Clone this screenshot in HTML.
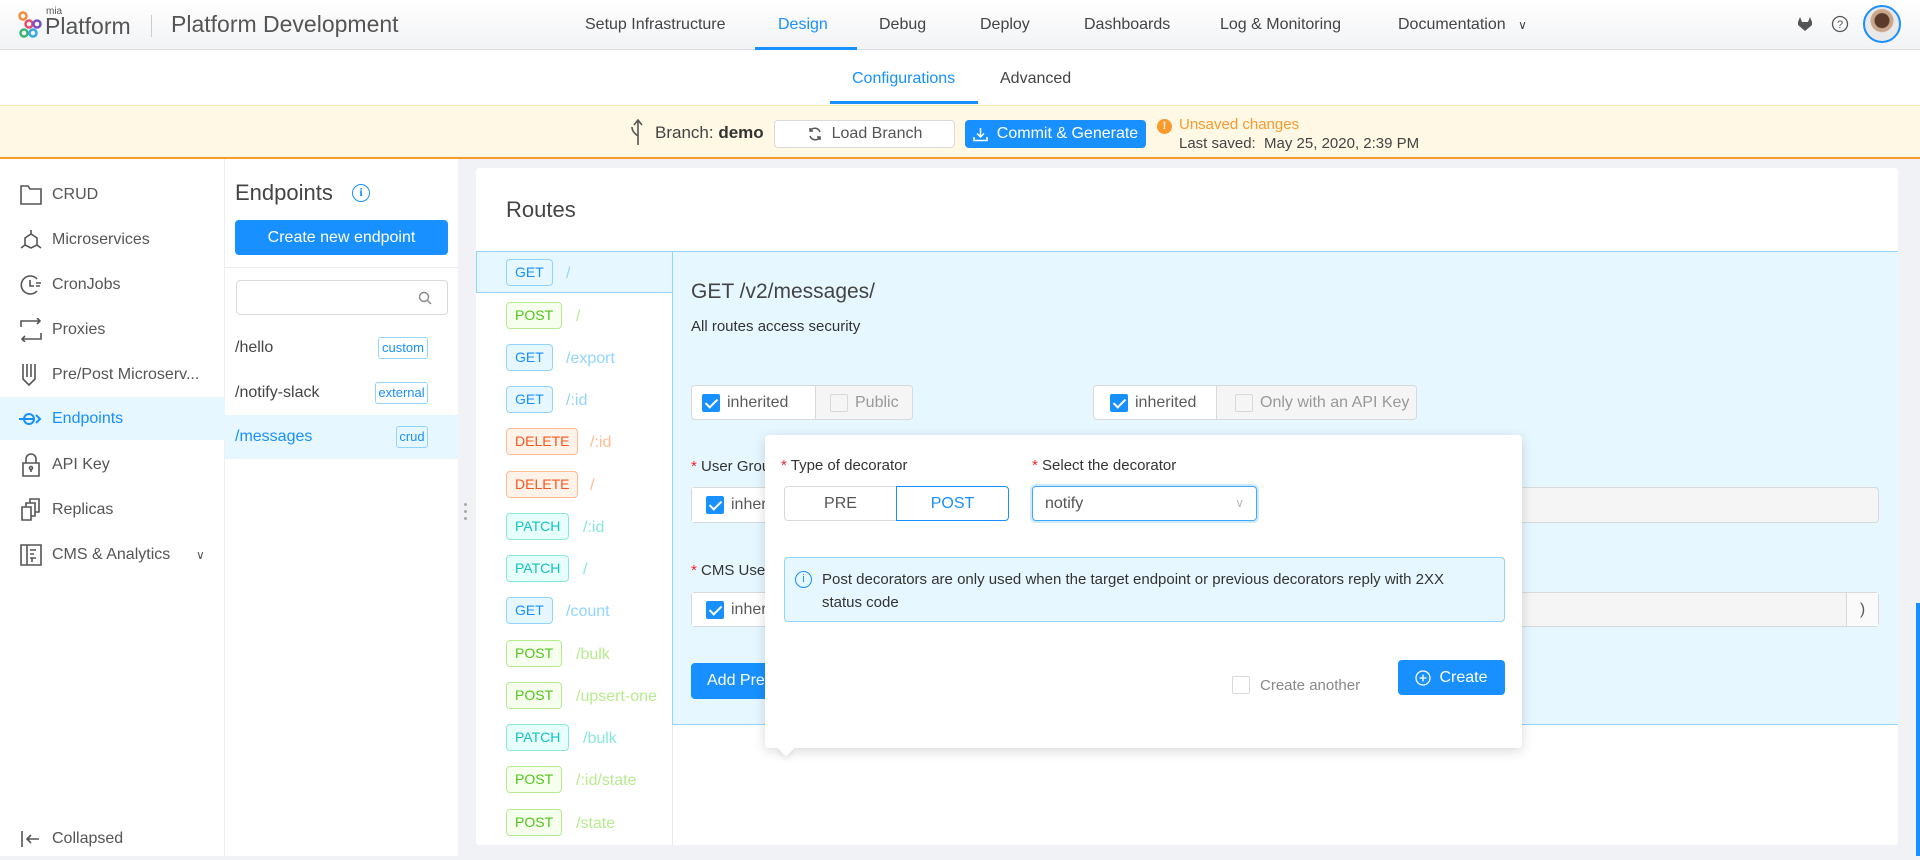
<!DOCTYPE html>
<html><head><meta charset="utf-8"><style>
*{box-sizing:border-box;margin:0;padding:0}
body{width:1920px;height:856px;overflow:hidden;background:#f0f2f5;font-family:"Liberation Sans",sans-serif;font-size:16px;color:rgba(0,0,0,.65);position:relative}
.a{position:absolute}
.hdr{left:0;top:0;width:1920px;height:50px;background:linear-gradient(#fff,#f2f3f5);border-bottom:1px solid #dcdfe4}
.nav{top:16px;font-size:16px;color:#444}
.sub{left:0;top:50px;width:1920px;height:55px;background:#fff}
.bar{left:0;top:105px;width:1920px;height:54px;background:#fef8e4;border-top:1px solid #f3e7b9;border-bottom:2px solid #fa9a2d}
.side{left:0;top:159px;width:225px;height:697px;background:#fff;border-right:1px solid #eee}
.si{left:0;width:225px;height:43px;display:flex;align-items:center;padding-left:52px;color:#555}
.ico{position:absolute;left:19px;top:10px;width:24px;height:24px}
.col2{left:225px;top:159px;width:233px;height:697px;background:#fff}
.card{left:476px;top:168px;width:1422px;height:677px;background:#fff;border-radius:3px}
.tag{position:absolute;left:30px;height:27px;border:1px solid;border-radius:4px;font-size:14px;line-height:25px;padding:0 8px;white-space:nowrap}
.rp{position:absolute;font-size:16px;line-height:27px;white-space:nowrap}
.btn{border-radius:4px;font-size:16px;display:flex;align-items:center;justify-content:center}
.cb{display:inline-block;width:18px;height:18px;border-radius:2px;background:#1890ff;position:relative;vertical-align:middle}
.cb:after{content:"";position:absolute;left:6px;top:2px;width:5px;height:10px;border:solid #fff;border-width:0 2px 2px 0;transform:rotate(45deg)}
.cbe{display:inline-block;width:18px;height:18px;border-radius:2px;border:1px solid #d9d9d9;background:#fff;vertical-align:middle}
.req{color:#f5222d}
</style></head><body>

<div class="a hdr">
  <svg class="a" style="left:17px;top:11px" width="28" height="28" viewBox="0 0 28 28" fill="none" stroke-width="2.5">
    <circle cx="6" cy="5" r="3.5" stroke="#f08a3c"/><circle cx="12" cy="13" r="3.5" stroke="#e64b6b"/><circle cx="20" cy="13" r="3.5" stroke="#7b4fc4"/><circle cx="7" cy="22" r="3.5" stroke="#3cb371"/><circle cx="16" cy="22" r="3.5" stroke="#35a7e8"/>
  </svg>
  <div class="a" style="left:46px;top:6px;font-size:10px;color:#555">mia</div>
  <div class="a" style="left:45px;top:13px;font-size:23px;color:#555">Platform</div>
  <div class="a" style="left:151px;top:15px;width:1px;height:22px;background:#ccc"></div>
  <div class="a" style="left:171px;top:11px;font-size:23px;color:#555">Platform Development</div>
  <div class="a nav" style="left:585px">Setup Infrastructure</div>
  <div class="a nav" style="left:778px;color:#1890ff">Design</div>
  <div class="a" style="left:755px;top:47px;width:102px;height:3px;background:#1890ff"></div>
  <div class="a nav" style="left:879px">Debug</div>
  <div class="a nav" style="left:980px">Deploy</div>
  <div class="a nav" style="left:1084px">Dashboards</div>
  <div class="a nav" style="left:1220px">Log &amp; Monitoring</div>
  <div class="a nav" style="left:1398px">Documentation <span style="font-size:12px;margin-left:8px">&#8744;</span></div>
  <svg class="a" style="left:1797px;top:17px" width="16" height="15" viewBox="0 0 16 15"><path d="M1 5 L3 0 L5 5 L11 5 L13 0 L15 5 L15 8 L8 14 L1 8Z" fill="#555"/></svg>
  <svg class="a" style="left:1831px;top:15px" width="18" height="18" viewBox="0 0 18 18"><circle cx="9" cy="9" r="7.5" fill="none" stroke="#555" stroke-width="1.3"/><text x="9" y="13" font-size="11" text-anchor="middle" fill="#555" font-family="Liberation Sans">?</text></svg>
  <div class="a" style="left:1863px;top:5px;width:38px;height:38px;border-radius:50%;border:2px solid #1890ff;background:radial-gradient(circle at 50% 40%,#5a3a2a 0 7px,#c9a58a 8px 11px,#e9e9e9 12px);overflow:hidden"></div>
</div>

<div class="a sub">
  <div class="a" style="left:852px;top:20px;color:#1890ff">Configurations</div>
  <div class="a" style="left:830px;top:51px;width:148px;height:3px;background:#1890ff"></div>
  <div class="a" style="left:1000px;top:20px;color:#444">Advanced</div>
</div>

<div class="a bar">
  <svg class="a" style="left:628px;top:12px" width="20" height="28" viewBox="0 0 20 28" fill="none" stroke="#555" stroke-width="1.6"><path d="M10 27 V3 M6 7 L10 2 L14 7 M10 18 Q4 14 4 9"/></svg>
  <div class="a" style="left:655px;top:17px;font-size:17px;color:#444">Branch: <b style="color:#333">demo</b></div>
  <div class="a btn" style="left:774px;top:14px;width:181px;height:28px;background:#fff;border:1px solid #d9d9d9;color:#555">
    <svg width="16" height="16" viewBox="0 0 16 16" style="margin-right:9px" fill="none" stroke="#555" stroke-width="1.5"><path d="M13 6 A5.5 5.5 0 0 0 3 5 M3 10 A5.5 5.5 0 0 0 13 11 M3 2 V5 H6 M13 14 V11 H10"/></svg>Load Branch</div>
  <div class="a btn" style="left:965px;top:14px;width:181px;height:28px;background:#1890ff;color:#fff">
    <svg width="15" height="15" viewBox="0 0 15 15" style="margin-right:9px" fill="none" stroke="#fff" stroke-width="1.5"><path d="M7.5 1 V10 M4 6.5 L7.5 10 L11 6.5 M1 10 V13.5 H14 V10"/></svg>Commit &amp; Generate</div>
  <div class="a" style="left:1157px;top:13px;width:15px;height:15px;border-radius:50%;background:#fa9a2d;color:#fff;font-size:11px;text-align:center;line-height:15px;font-weight:bold">!</div>
  <div class="a" style="left:1179px;top:10px;color:#fa9a2d;font-size:15px">Unsaved changes</div>
  <div class="a" style="left:1179px;top:29px;color:#444;font-size:15px">Last saved:&nbsp; May 25, 2020, 2:39 PM</div>
</div>

<div class="a side">
  <div class="a si" style="top:14px"><svg class="ico" viewBox="0 0 24 24" fill="none" stroke="#555" stroke-width="1.6"><path d="M2 3 H9 L11 6 H22 V21 H2Z"/></svg>CRUD</div>
  <div class="a si" style="top:59px"><svg class="ico" viewBox="0 0 24 24" fill="none" stroke="#555" stroke-width="1.6"><path d="M12 2 V6 M6 10 L12 6 L18 10 L18 17 L12 20 L6 17Z M6 17 L2 20 M18 17 L22 20"/></svg>Microservices</div>
  <div class="a si" style="top:104px"><svg class="ico" viewBox="0 0 24 24" fill="none" stroke="#555" stroke-width="1.6"><path d="M18 6 A9 9 0 1 0 18 18 M11 7 V13 H15 M17 10 H22 M17 13 H21"/></svg>CronJobs</div>
  <div class="a si" style="top:149px"><svg class="ico" viewBox="0 0 24 24" fill="none" stroke="#555" stroke-width="1.6"><path d="M2 9 V3 H21 M18 0 L21 3 L18 6 M22 15 V21 H3 M6 18 L3 21 L6 24"/></svg>Proxies</div>
  <div class="a si" style="top:194px"><svg class="ico" viewBox="0 0 24 24" fill="none" stroke="#555" stroke-width="1.6"><path d="M4 1 V16 L10 22 L16 16 V1 M8 1 V14 M12 1 V14"/></svg>Pre/Post Microserv...</div>
  <div class="a si" style="top:238px;background:#e6f7ff;color:#1890ff"><svg class="ico" viewBox="0 0 24 24" fill="none" stroke="#1890ff" stroke-width="2"><circle cx="10" cy="12" r="5"/><path d="M0 12 H15 M17 8 L21 12 L17 16"/></svg>Endpoints</div>
  <div class="a si" style="top:284px"><svg class="ico" viewBox="0 0 24 24" fill="none" stroke="#555" stroke-width="1.6"><path d="M4 10 H20 V23 H4Z M7 10 V6 A5 5 0 0 1 17 6 V10"/><circle cx="12" cy="15" r="1.5"/><path d="M12 16 V19"/></svg>API Key</div>
  <div class="a si" style="top:329px"><svg class="ico" viewBox="0 0 24 24" fill="none" stroke="#555" stroke-width="1.6"><path d="M3 9 H12 V22 H3Z M7 9 V5 H16 V18 H12 M11 5 V1 H20 V14 H16"/></svg>Replicas</div>
  <div class="a si" style="top:374px"><svg class="ico" viewBox="0 0 24 24" fill="none" stroke="#555" stroke-width="1.6"><path d="M2 2 H22 V22 H2Z M8 2 V22 M11 7 H17 M11 11 H15 M11 15 H17 M13 15 V19"/></svg>CMS &amp; Analytics<span style="position:absolute;left:196px;font-size:12px">&#8744;</span></div>
  <div class="a si" style="top:658px"><svg class="ico" viewBox="0 0 24 24" fill="none" stroke="#555" stroke-width="1.6"><path d="M3 4 V20 M20 12 H8 M12 8 L8 12 L12 16"/></svg>Collapsed</div>
</div>

<div class="a col2">
  <div class="a" style="left:10px;top:21px;font-size:22px;color:#444">Endpoints</div>
  <div class="a" style="left:127px;top:25px;width:18px;height:18px;border:1.5px solid #1890ff;border-radius:50%;color:#1890ff;font-size:12px;text-align:center;line-height:15px;font-weight:bold;font-family:'Liberation Serif',serif">i</div>
  <div class="a btn" style="left:10px;top:61px;width:213px;height:35px;background:#1890ff;color:#fff">Create new endpoint</div>
  <div class="a" style="left:0;top:108px;width:233px;height:1px;background:#eee"></div>
  <div class="a" style="left:11px;top:121px;width:212px;height:35px;border:1px solid #d9d9d9;border-radius:4px"><svg class="a" style="left:181px;top:10px" width="14" height="14" viewBox="0 0 14 14" fill="none" stroke="#888" stroke-width="1.4"><circle cx="6" cy="6" r="4.5"/><path d="M9.5 9.5 L13 13"/></svg></div>
  <div class="a" style="left:10px;top:180px;color:#444">/hello</div>
  <div class="a" style="left:153px;top:178px;width:50px;height:22px;border:1px solid #91d5ff;border-radius:3px;color:#1890ff;font-size:13px;text-align:center;line-height:20px">custom</div>
  <div class="a" style="left:10px;top:225px;color:#444">/notify-slack</div>
  <div class="a" style="left:150px;top:223px;width:53px;height:22px;border:1px solid #91d5ff;border-radius:3px;color:#1890ff;font-size:13px;text-align:center;line-height:20px">external</div>
  <div class="a" style="left:0;top:256px;width:233px;height:44px;background:#e6f7ff"></div>
  <div class="a" style="left:10px;top:269px;color:#1890ff">/messages</div>
  <div class="a" style="left:171px;top:267px;width:32px;height:22px;border:1px solid #91d5ff;border-radius:3px;color:#1890ff;font-size:13px;text-align:center;line-height:20px">crud</div>
</div>
<div class="a" style="left:464px;top:503px;width:3px;height:3px;background:#aaa;border-radius:50%;box-shadow:0 7px 0 #aaa,0 14px 0 #aaa"></div>

<div class="a card">
  <div class="a" style="left:30px;top:29px;font-size:22px;color:#444">Routes</div>
  <div class="a" style="left:0;top:83px;width:196px;height:42px;background:#e6f7ff;border:1px solid #91d5ff;border-right:none"></div>
  <div class="a" style="left:196px;top:83px;width:1px;height:594px;background:#e8e8e8"></div>
  <div style="position:absolute;left:0;top:0;width:196px">
    <span class="tag" style="top:91px;color:#1890ff;background:#e6f7ff;border-color:#91d5ff">GET</span><span class="rp" style="left:90px;top:92px;color:#91d5ff">/</span>
    <span class="tag" style="top:134px;color:#52c41a;background:#f6ffed;border-color:#b7eb8f">POST</span><span class="rp" style="left:100px;top:135px;color:#b7eb8f">/</span>
    <span class="tag" style="top:176px;color:#1890ff;background:#e6f7ff;border-color:#91d5ff">GET</span><span class="rp" style="left:90px;top:177px;color:#91d5ff">/export</span>
    <span class="tag" style="top:218px;color:#1890ff;background:#e6f7ff;border-color:#91d5ff">GET</span><span class="rp" style="left:90px;top:219px;color:#91d5ff">/:id</span>
    <span class="tag" style="top:260px;color:#fa541c;background:#fff2e8;border-color:#ffbb96">DELETE</span><span class="rp" style="left:114px;top:261px;color:#ffbb96">/:id</span>
    <span class="tag" style="top:303px;color:#fa541c;background:#fff2e8;border-color:#ffbb96">DELETE</span><span class="rp" style="left:114px;top:304px;color:#ffbb96">/</span>
    <span class="tag" style="top:345px;color:#13c2c2;background:#e6fffb;border-color:#87e8de">PATCH</span><span class="rp" style="left:107px;top:346px;color:#87e8de">/:id</span>
    <span class="tag" style="top:387px;color:#13c2c2;background:#e6fffb;border-color:#87e8de">PATCH</span><span class="rp" style="left:107px;top:388px;color:#87e8de">/</span>
    <span class="tag" style="top:429px;color:#1890ff;background:#e6f7ff;border-color:#91d5ff">GET</span><span class="rp" style="left:90px;top:430px;color:#91d5ff">/count</span>
    <span class="tag" style="top:472px;color:#52c41a;background:#f6ffed;border-color:#b7eb8f">POST</span><span class="rp" style="left:100px;top:473px;color:#b7eb8f">/bulk</span>
    <span class="tag" style="top:514px;color:#52c41a;background:#f6ffed;border-color:#b7eb8f">POST</span><span class="rp" style="left:100px;top:515px;color:#b7eb8f">/upsert-one</span>
    <span class="tag" style="top:556px;color:#13c2c2;background:#e6fffb;border-color:#87e8de">PATCH</span><span class="rp" style="left:107px;top:557px;color:#87e8de">/bulk</span>
    <span class="tag" style="top:598px;color:#52c41a;background:#f6ffed;border-color:#b7eb8f">POST</span><span class="rp" style="left:100px;top:599px;color:#b7eb8f">/:id/state</span>
    <span class="tag" style="top:641px;color:#52c41a;background:#f6ffed;border-color:#b7eb8f">POST</span><span class="rp" style="left:100px;top:642px;color:#b7eb8f">/state</span>
  </div>
  <div class="a" style="left:196px;top:83px;width:1226px;height:474px;background:#e6f7ff;border:1px solid #91d5ff;border-right:none"></div>
  <div class="a" style="left:215px;top:112px;font-size:21px;color:#444">GET /v2/messages/</div>
  <div class="a" style="left:215px;top:150px;font-size:15px;color:#333">All routes access security</div>
  <div class="a" style="left:215px;top:217px;width:222px;height:35px;border:1px solid #d9d9d9;border-radius:4px;background:#fff;overflow:hidden">
    <div class="a" style="left:0;top:0;width:123px;height:33px;display:flex;align-items:center;padding-left:10px;gap:7px"><span class="cb"></span>inherited</div>
    <div class="a" style="left:123px;top:0;width:98px;height:33px;background:#f5f5f5;border-left:1px solid #d9d9d9;display:flex;align-items:center;padding-left:14px;gap:7px;color:#999"><span class="cbe" style="background:#f5f5f5"></span>Public</div>
  </div>
  <div class="a" style="left:617px;top:217px;width:324px;height:35px;border:1px solid #d9d9d9;border-radius:4px;background:#fff;overflow:hidden">
    <div class="a" style="left:0;top:0;width:122px;height:33px;display:flex;align-items:center;padding-left:16px;gap:7px"><span class="cb"></span>inherited</div>
    <div class="a" style="left:122px;top:0;width:202px;height:33px;background:#f5f5f5;border-left:1px solid #d9d9d9;display:flex;align-items:center;padding-left:18px;gap:7px;color:#999"><span class="cbe" style="background:#f5f5f5"></span>Only with an API Key</div>
  </div>
  <div class="a" style="left:215px;top:290px;font-size:15px;color:#333"><span class="req">*</span> User Groups</div>
  <div class="a" style="left:215px;top:319px;width:1188px;height:36px;border:1px solid #d9d9d9;border-radius:4px;background:#f5f5f5"><div style="position:absolute;left:0;top:0;width:160px;height:34px;background:#fff;display:flex;align-items:center;padding-left:14px;gap:7px"><span class="cb"></span>inherited</div></div>
  <div class="a" style="left:215px;top:394px;font-size:15px;color:#333"><span class="req">*</span> CMS User</div>
  <div class="a" style="left:215px;top:424px;width:1188px;height:35px;border:1px solid #d9d9d9;border-radius:4px;background:#f5f5f5"><div style="position:absolute;left:0;top:0;width:160px;height:33px;background:#fff;display:flex;align-items:center;padding-left:14px;gap:7px"><span class="cb"></span>inherited</div><div style="position:absolute;right:0;top:0;width:32px;height:33px;border-left:1px solid #d9d9d9;background:#fafafa;text-align:center;line-height:33px">)</div></div>
  <div class="a btn" style="left:215px;top:495px;width:120px;height:36px;background:#1890ff;color:#fff;justify-content:flex-start;padding-left:16px">Add Pre/Post</div>
</div>
<div class="a" style="left:1916px;top:603px;width:4px;height:253px;background:#1890ff"></div>

<!-- popover -->
<div class="a" style="left:765px;top:435px;width:757px;height:313px;background:#fff;border-radius:4px;box-shadow:0 3px 12px rgba(0,0,0,.15)">
  <div class="a" style="left:16px;top:22px;font-size:15px;color:#333"><span class="req">*</span> Type of decorator</div>
  <div class="a" style="left:267px;top:22px;font-size:15px;color:#333"><span class="req">*</span> Select the decorator</div>
  <div class="a" style="left:19px;top:51px;width:113px;height:35px;border:1px solid #d9d9d9;border-radius:4px 0 0 4px;text-align:center;line-height:33px;color:#555">PRE</div>
  <div class="a" style="left:131px;top:51px;width:113px;height:35px;border:1px solid #1890ff;border-radius:0 4px 4px 0;text-align:center;line-height:33px;color:#1890ff">POST</div>
  <div class="a" style="left:267px;top:51px;width:225px;height:35px;border:1px solid #40a9ff;border-radius:4px;box-shadow:0 0 0 2px rgba(24,144,255,.2);line-height:33px;padding-left:12px;color:#555">notify<span style="position:absolute;right:12px;font-size:12px;color:#bbb">&#8744;</span></div>
  <div class="a" style="left:19px;top:122px;width:721px;height:65px;background:#e6f7ff;border:1px solid #91d5ff;border-radius:4px">
    <div class="a" style="left:10px;top:13px;width:17px;height:17px;border:1.3px solid #1890ff;border-radius:50%;color:#1890ff;font-size:11px;text-align:center;line-height:14px">i</div>
    <div class="a" style="left:37px;top:10px;width:650px;font-size:15px;line-height:23px;color:#333">Post decorators are only used when the target endpoint or previous decorators reply with 2XX status code</div>
  </div>
  <div class="a" style="left:467px;top:241px;display:flex;align-items:center;gap:10px;font-size:15px;color:#888"><span class="cbe"></span>Create another</div>
  <div class="a btn" style="left:633px;top:225px;width:107px;height:35px;background:#1890ff;color:#fff">
    <svg width="16" height="16" viewBox="0 0 16 16" style="margin-right:8px" fill="none" stroke="#fff" stroke-width="1.3"><circle cx="8" cy="8" r="7"/><path d="M8 4.5 V11.5 M4.5 8 H11.5"/></svg>Create</div>
</div>
<div class="a" style="left:780px;top:742px;width:12px;height:12px;background:#fff;transform:rotate(45deg);box-shadow:3px 3px 5px rgba(0,0,0,.06)"></div>
</body></html>
